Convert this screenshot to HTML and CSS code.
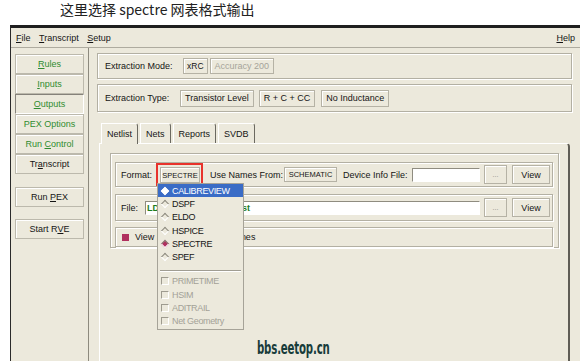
FILE: index.html
```html
<!DOCTYPE html>
<html lang="zh-CN">
<head>
    <meta charset="UTF-8">
    <meta name="viewport" content="width=device-width, initial-scale=1.0">
    <title>Calibre Interactive - PEX</title>
    <link rel="stylesheet" href="styles.css">
</head>
<body>
    <div class="caption">这里选择 spectre 网表格式输出</div>

    <div class="window">
        <div class="menubar">
            <span class="menu-item"><u>F</u>ile</span>
            <span class="menu-item"><u>T</u>ranscript</span>
            <span class="menu-item"><u>S</u>etup</span>
            <span class="menu-item help"><u>H</u>elp</span>
        </div>

        <div class="main">
            <div class="nav">
                <button class="nav-button green"><u>R</u>ules</button>
                <button class="nav-button green"><u>I</u>nputs</button>
                <button class="nav-button green selected"><u>O</u>utputs</button>
                <button class="nav-button green">PEX Options</button>
                <button class="nav-button green">Run <u>C</u>ontrol</button>
                <button class="nav-button">Tr<u>a</u>nscript</button>
                <button class="nav-button run-pex">Run <u>P</u>EX</button>
                <button class="nav-button start-rve">Start R<u>V</u>E</button>
            </div>

            <div class="content">
                <div class="group mode-group">
                    <span class="mode-label">Extraction Mode:</span>
                    <button class="btn xrc">xRC</button>
                    <button class="btn disabled accuracy">Accuracy 200</button>
                </div>

                <div class="group type-group">
                    <span class="type-label">Extraction Type:</span>
                    <button class="btn">Transistor Level</button>
                    <button class="btn rcc">R + C + CC</button>
                    <button class="btn inductance">No Inductance</button>
                </div>

                <div class="tabs">
                    <div class="tab active">Netlist</div>
                    <div class="tab">Nets</div>
                    <div class="tab">Reports</div>
                    <div class="tab">SVDB</div>
                </div>

                <div class="tab-frame">
                    <div class="netlist-box">
                        <div class="row format-row">
                            <span class="format-label">Format:</span>
                            <span class="highlight-box">
                                <button class="btn tiny spectre">SPECTRE</button>
                            </span>
                            <span class="names-label">Use Names From:</span>
                            <button class="btn tiny schematic">SCHEMATIC</button>
                            <span class="device-label">Device Info File:</span>
                            <span class="field device-field"></span>
                            <button class="btn browse">...</button>
                            <button class="btn view">View</button>
                        </div>

                        <div class="row file-row">
                            <span class="file-label">File:</span>
                            <span class="field file-field">LDO_pex.spectre.netlist</span>
                            <button class="btn browse">...</button>
                            <button class="btn view">View</button>
                        </div>

                        <div class="row view-row">
                            <span class="checkbox on"></span>
                            <span class="view-label">View Netlist with Node Names</span>
                        </div>
                    </div>
                </div>
            </div>
        </div>
    </div>

    <!-- Format 下拉菜单 -->
    <div class="dropdown">
        <div class="menu-entry hl"><span class="slot"><span class="diamond white"></span></span>CALIBREVIEW</div>
        <div class="menu-entry"><span class="slot"><span class="diamond"></span></span>DSPF</div>
        <div class="menu-entry"><span class="slot"><span class="diamond"></span></span>ELDO</div>
        <div class="menu-entry"><span class="slot"><span class="diamond"></span></span>HSPICE</div>
        <div class="menu-entry"><span class="slot"><span class="diamond picked"></span></span>SPECTRE</div>
        <div class="menu-entry"><span class="slot"><span class="diamond"></span></span>SPEF</div>
        <div class="menu-sep"></div>
        <div class="menu-entry off"><span class="slot"><span class="check"></span></span>PRIMETIME</div>
        <div class="menu-entry off"><span class="slot"><span class="check"></span></span>HSIM</div>
        <div class="menu-entry off"><span class="slot"><span class="check"></span></span>ADITRAIL</div>
        <div class="menu-entry off"><span class="slot"><span class="check"></span></span>Net Geometry</div>
    </div>

    <div class="watermark">bbs.eetop.cn</div>
</body>
</html>
```

FILE: styles.css
```css
body {
    margin: 0;
    background-color: #fff;
    font-family: "Liberation Sans", Arial, sans-serif;
    font-size: 9px;
    color: #151515;
    height: 361px;
    overflow: hidden;
    position: relative;
}

u {
    text-decoration: underline;
    text-underline-offset: 1px;
}

.caption {
    height: 25px;
    line-height: 18px;
    padding-left: 60px;
    box-sizing: border-box;
    font-family: "Noto Sans CJK SC", sans-serif;
    font-size: 14px;
    color: #222;
}

.window {
    margin-left: 10px;
    width: 570px;
    height: 336px;
    box-sizing: border-box;
    background-color: #ece9dc;
    border-top: 3px solid #1f1f1f;
    border-left: 1px solid #2a2a2a;
    display: flex;
    flex-direction: column;
}

.menubar {
    display: flex;
    align-items: center;
    gap: 8.5px;
    height: 20px;
    box-sizing: border-box;
    padding: 0 5px;
    border-bottom: 1px solid #aeab9f;
}

.help {
    margin-left: auto;
}

.main {
    display: flex;
    flex: 1;
}

/* 左側のナビ */
.nav {
    width: 78px;
    box-sizing: border-box;
    border-right: 1px solid #8d8a7e;
    padding: 6px 4px 0;
    display: flex;
    flex-direction: column;
}

.nav-button {
    height: 20px;
    width: 100%;
    padding: 0;
    font: inherit;
    color: #151515;
    background-color: #ece9dc;
    border: 1px solid #bcb9ac;
    box-shadow: inset 1px 1px 0 #fff;
}

.nav-button.green { color: #2f8c2f; }

.nav-button.selected {
    border-color: #85827a #fff #fff #85827a;
    box-shadow: none;
}

.run-pex { margin-top: 13px; }
.start-rve { margin-top: 12px; }

.content {
    flex: 1;
    min-width: 0;
    padding: 5px 8px 0;
    display: flex;
    flex-direction: column;
}

.group {
    display: flex;
    align-items: center;
    padding-left: 7px;
    border: 1px solid #b3b0a3;
    box-shadow: inset 1px 1px 0 #fff, 1px 1px 0 #fff;
}

.mode-group { height: 26px; box-sizing: border-box; }
.type-group { height: 28px; box-sizing: border-box; margin-top: 5px; }

.mode-label { width: 78px; }
.type-label { width: 75px; }

.btn {
    height: 17px;
    padding: 0 4px;
    font: inherit;
    color: #151515;
    background-color: #ece9dc;
    border: 1px solid #b5b2a5;
    box-shadow: inset 1px 1px 0 #fff;
    white-space: nowrap;
}

.btn.xrc { height: 16px; padding: 0 3px; font-size: 8.5px; }
.btn.disabled { color: #a6a49a; height: 16px; }
.accuracy { margin-left: 2px; }
.rcc { margin-left: 5px; }
.inductance { margin-left: 6px; }

.btn.tiny {
    font-size: 7.5px;
    padding: 0;
}

/* タブ */
.tabs {
    display: flex;
    height: 20px;
    margin: 11px 0 0 4px;
}

.tab {
    height: 20px;
    box-sizing: border-box;
    padding: 0 5px;
    margin-right: 2px;
    display: flex;
    align-items: center;
    border-top: 1px solid #fff;
    border-left: 1px solid #fff;
    border-right: 1px solid #6b6960;
    border-top-right-radius: 3px;
}

.tab.active {
    height: 21px;
    margin-bottom: -1px;
    background-color: #ece9dc;
    position: relative;
}

.tab-frame {
    flex: 1;
    margin: 0 2px;
    padding: 9px 9px 0 10px;
    border-top: 1px solid #fff;
    border-left: 1px solid #fff;
    border-right: 2px solid #5f5d55;
    border-top-right-radius: 4px;
}

.netlist-box {
    padding: 8px 5px 0 4px;
    border: 1px solid #b3b0a3;
    box-shadow: inset 1px 1px 0 #fff, 1px 1px 0 #fff;
}

.row {
    display: flex;
    align-items: center;
    padding-left: 5px;
    box-sizing: border-box;
    border: 1px solid #b3b0a3;
    box-shadow: inset 1px 1px 0 #fff, 1px 1px 0 #fff;
}

.format-row { height: 25px; }
.file-row { height: 27px; margin-top: 7px; }
.view-row { height: 20px; margin-top: 6px; }

.format-label { width: 35px; }

.highlight-box {
    display: flex;
    border: 2px solid #e8332c;
    padding: 2px 1px 1px 2px;
}

.spectre { width: 40px; height: 16px; }

.names-label { width: 74px; margin-left: 7px; }
.schematic { width: 53px; height: 15px; }
.device-label { width: 69px; margin-left: 6px; }

.field {
    height: 14px;
    box-sizing: border-box;
    background-color: #fff;
    border: 1px solid;
    border-color: #8f8c80 #fff #fff #8f8c80;
}

.device-field { width: 68px; }

.file-label { width: 24px; }

.file-field {
    width: 335px;
    padding-left: 1px;
    line-height: 12px;
    font-weight: bold;
    color: #1d7d1d;
    white-space: nowrap;
    overflow: hidden;
}

.browse {
    width: 23px;
    height: 19px;
    margin-left: 4px;
    padding: 0;
    color: #8a887e;
    font-size: 7px;
}

.view {
    width: 38px;
    height: 19px;
    margin-left: 5px;
    padding: 0;
}

.checkbox {
    width: 7px;
    height: 7px;
    margin-left: 1px;
}

.checkbox.on { background-color: #b0305f; }

.view-label { margin-left: 6px; white-space: nowrap; }

/* 下拉菜单 */
.dropdown {
    position: absolute;
    left: 157px;
    top: 183px;
    width: 87px;
    box-sizing: border-box;
    padding-bottom: 1px;
    background-color: #ece9dc;
    border: 1px solid #a6a398;
}

.menu-entry {
    height: 13.3px;
    display: flex;
    align-items: center;
    padding-left: 2px;
    letter-spacing: -0.35px;
    white-space: nowrap;
}

.menu-entry.hl {
    background-color: #3a6cc6;
    color: #fff;
}

.menu-entry.off { color: #a3a197; }

.slot {
    width: 10px;
    margin-right: 2px;
    display: flex;
    justify-content: center;
}

.diamond {
    width: 6px;
    height: 6px;
    box-sizing: border-box;
    transform: rotate(45deg);
    border: 1px solid;
    border-color: #8d8a7e #fff #fff #8d8a7e;
}

.diamond.white {
    background-color: #fff;
    border-color: #fff;
}

.diamond.picked {
    background-color: #b0305f;
}

.check {
    width: 8px;
    height: 8px;
    box-sizing: border-box;
    border: 1px solid;
    border-color: #9e9b8f #fff #fff #9e9b8f;
}

.menu-sep {
    margin: 6px 2px 3px;
    border-top: 1px solid #a09d92;
    border-bottom: 1px solid #fff;
}

.watermark {
    position: absolute;
    left: 257px;
    top: 338px;
    font-family: "DejaVu Sans", sans-serif;
    font-weight: bold;
    font-size: 17px;
    letter-spacing: -0.3px;
    color: #183c3a;
    transform: scaleX(0.6);
    transform-origin: left center;
}
```
